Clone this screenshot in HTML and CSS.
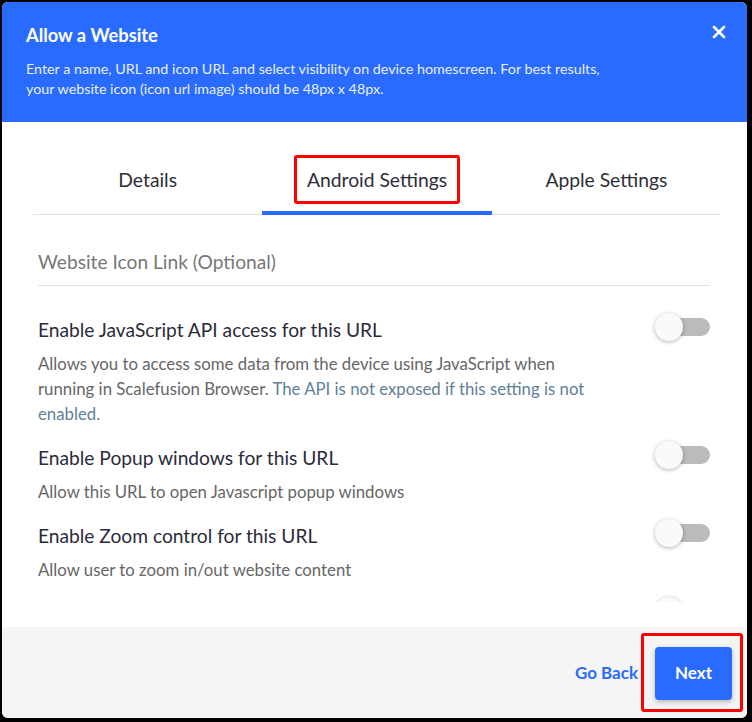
FILE: index.html
```html
<!DOCTYPE html>
<html lang="en">
<head>
  <meta charset="UTF-8">
  <meta name="viewport" content="width=device-width, initial-scale=1.0">
  <title>Allow a Website</title>
  <link rel="stylesheet" href="styles.css">
</head>
<body>
  <div class="dialog">
    <div class="dialog-header">
      <h3>Allow a Website</h3>
      <p>Enter a name, URL and icon URL and select visibility on device homescreen. For best results,<br>
        your website icon (icon url image) should be 48px x 48px.</p>
      <button class="close-btn" aria-label="Close">
        <svg width="14" height="14" viewBox="0 0 14 14">
          <path d="M2 2 L12 12 M12 2 L2 12" stroke="#fff" stroke-width="2.6" stroke-linecap="round"/>
        </svg>
      </button>
    </div>

    <div class="tabs">
      <div class="tab"><span>Details</span></div>
      <div class="tab active"><span class="marked">Android Settings</span></div>
      <div class="tab"><span>Apple Settings</span></div>
    </div>

    <div class="dialog-body">
      <div class="field-label">Website Icon Link (Optional)</div>

      <div class="setting">
        <div class="setting-text">
          <div class="setting-title">Enable JavaScript API access for this URL</div>
          <div class="setting-desc">Allows you to access some data from the device using JavaScript when<br>
            running in Scalefusion Browser. <span class="note">The API is not exposed if this setting is not<br>enabled.</span></div>
        </div>
        <div class="toggle"><span class="knob"></span></div>
      </div>

      <div class="setting">
        <div class="setting-text">
          <div class="setting-title">Enable Popup windows for this URL</div>
          <div class="setting-desc">Allow this URL to open Javascript popup windows</div>
        </div>
        <div class="toggle"><span class="knob"></span></div>
      </div>

      <div class="setting">
        <div class="setting-text">
          <div class="setting-title">Enable Zoom control for this URL</div>
          <div class="setting-desc">Allow user to zoom in/out website content</div>
        </div>
        <div class="toggle"><span class="knob"></span></div>
      </div>

      <!-- next row, scrolled out of view -->
      <div class="setting">
        <div class="setting-text"></div>
        <div class="toggle"><span class="knob"></span></div>
      </div>
    </div>

    <div class="dialog-footer">
      <a class="back-link" href="#">Go Back</a>
      <span class="marked-btn"><button class="btn next-btn">Next</button></span>
    </div>
  </div>
</body>
</html>
```

FILE: styles.css
```css
body {
  font-family: Lato, "Noto Sans", sans-serif;
  margin: 0;
  padding: 2px 5px 4px 2px;
  background: #000;
}

.dialog {
  height: 716px;
  background: #fff;
  border-radius: 6px;
  overflow: hidden;
  display: flex;
  flex-direction: column;
}

.dialog-header {
  position: relative;
  height: 120px;
  box-sizing: border-box;
  padding: 20px 24px 0 24px;
  background: #2a6bff;
  color: #fff;
}

.dialog-header h3 {
  margin: 0;
  font-size: 18.3px;
  font-weight: 700;
  line-height: 26px;
}

.dialog-header p {
  margin: 11px 0 0;
  font-size: 14.3px;
  line-height: 20px;
  color: #e8efff;
}

.close-btn {
  position: absolute;
  top: 23px;
  right: 21px;
  padding: 0;
  border: none;
  background: none;
  cursor: pointer;
}

.tabs {
  display: flex;
  margin: 19px 26px 0 31px;
  border-bottom: 1px solid #e2e2e2;
}

.tab {
  flex: 1;
  height: 74px;
  box-sizing: border-box;
  padding-top: 7px;
  display: flex;
  align-items: center;
  justify-content: center;
  font-size: 19.3px;
  color: #2e2e38;
  border-bottom: 4px solid transparent;
  margin-bottom: -1px;
}

.tab.active {
  border-bottom-color: #2a6bff;
}

.marked {
  border: 3px solid #f00;
  border-radius: 3px;
  padding: 10px 10px;
}

.dialog-body {
  flex: 1;
  overflow: hidden;
  margin: 0 37px 25px 36px;
}

.field-label {
  height: 71px;
  box-sizing: border-box;
  padding-top: 35px;
  font-size: 19.2px;
  color: #777;
  border-bottom: 1px solid #e2e2e2;
}

.setting {
  display: flex;
  justify-content: space-between;
  align-items: flex-start;
  margin-top: 31px;
}

.setting + .setting {
  margin-top: 19px;
}

.setting-title {
  font-size: 19.2px;
  line-height: 26px;
  color: #2b2b3a;
}

.setting-desc {
  margin-top: 8px;
  font-size: 16.8px;
  line-height: 25px;
  color: #666;
}

.setting-desc .note {
  color: #5f7f96;
}

.toggle {
  position: relative;
  flex: 0 0 auto;
  width: 50px;
  height: 18px;
  margin-top: 1px;
  border-radius: 9px;
  background: #bbb;
}

.knob {
  position: absolute;
  left: -5px;
  top: -5px;
  width: 28px;
  height: 28px;
  border-radius: 50%;
  background: #fafafa;
  box-shadow: 0 1px 4px rgba(0, 0, 0, 0.3);
}

.dialog-footer {
  height: 91px;
  flex: 0 0 auto;
  display: flex;
  align-items: center;
  justify-content: flex-end;
  gap: 3px;
  padding-right: 4px;
  background: #f5f5f5;
}

.back-link {
  font-size: 17px;
  font-weight: 700;
  color: #2a6bff;
  text-decoration: none;
}

.marked-btn {
  border: 3px solid #f00;
  border-radius: 3px;
  padding: 11px 8px 9px 11px;
}

.btn {
  border: none;
  border-radius: 4px;
  font-family: inherit;
  cursor: pointer;
}

.next-btn {
  display: block;
  width: 77px;
  height: 53px;
  padding-bottom: 3px;
  font-size: 17px;
  font-weight: 700;
  color: #fff;
  background: #2a6bff;
  box-shadow: 0 2px 5px rgba(0, 0, 0, 0.25);
}
```
